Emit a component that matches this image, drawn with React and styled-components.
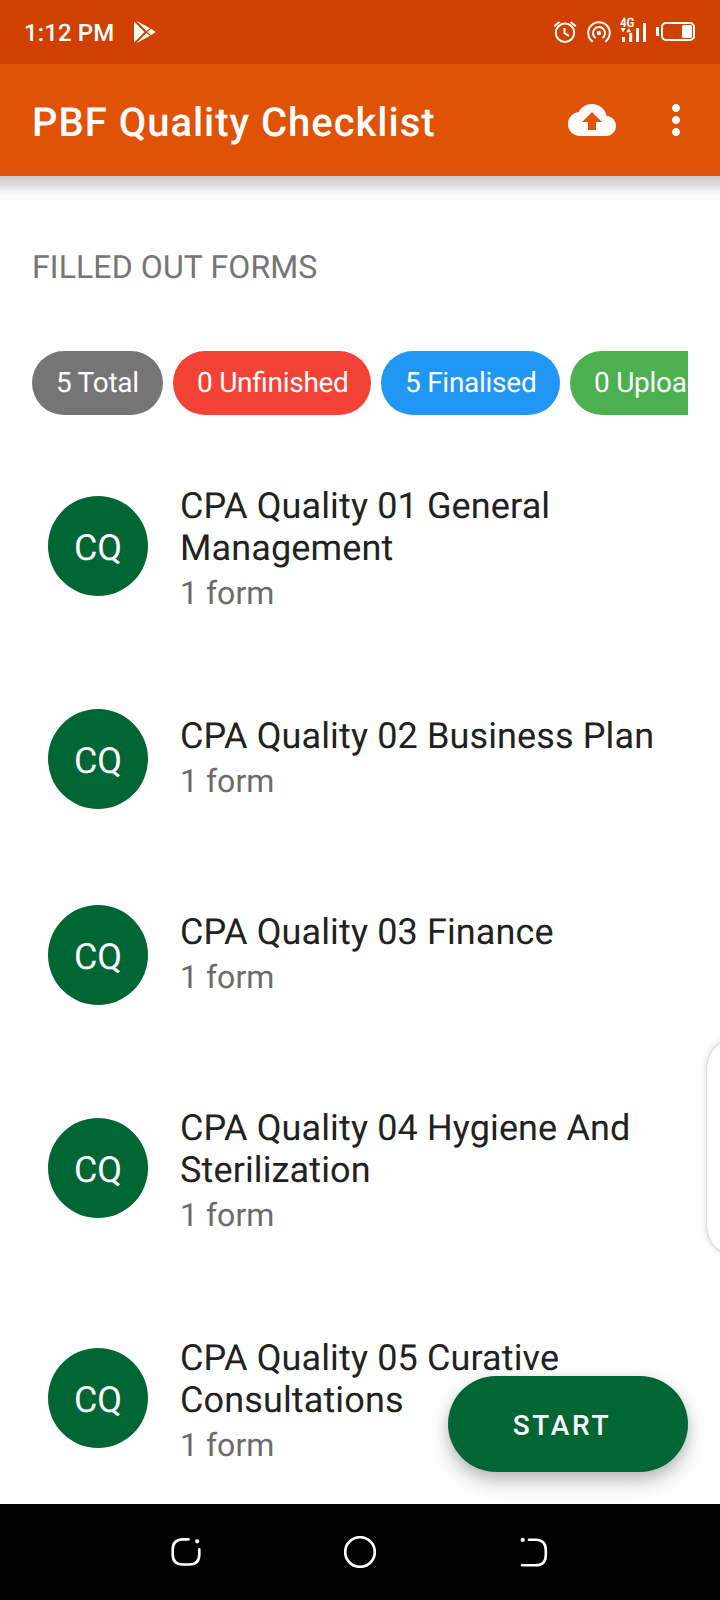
import React from "react";
import styled, { createGlobalStyle } from "styled-components";

const Global = createGlobalStyle`
  *, *::before, *::after { box-sizing: border-box; }
  html, body { margin: 0; padding: 0; background: #fff; }
  body { font-family: Roboto, "Noto Sans", sans-serif; overflow: hidden; text-rendering: geometricPrecision; }
`;

const Screen = styled.div`
  position: relative;
  display: flex;
  flex-direction: column;
  width: 720px;
  height: 1600px;
  overflow: hidden;
  background: #fefefe;
`;

const StatusBar = styled.div`
  flex: none;
  display: flex;
  align-items: center;
  justify-content: space-between;
  height: 64px;
  padding: 0 24px;
  background: #d04000;
  color: #fff;
`;

const StatusGroup = styled.div`
  display: flex;
  align-items: center;
`;

const Clock = styled.span`
  font-size: 24px;
  font-weight: 500;
  line-height: 28px;
  letter-spacing: 0.1px;
  margin-right: 20px;
  padding-top: 2px;
`;

const StatusIcons = styled.svg`
  display: block;
  width: 144px;
  height: 28px;
  overflow: visible;
`;

const NetworkLabel = styled.text`
  font-size: 13px;
  font-weight: 700;
`;

const AppBar = styled.header`
  position: relative;
  flex: none;
  display: flex;
  align-items: center;
  height: 112px;
  padding: 0 32px;
  background: #e05206;
  color: #fff;

  &::after {
    content: "";
    position: absolute;
    left: 0;
    right: 0;
    top: 100%;
    height: 20px;
    background: linear-gradient(rgba(0, 0, 0, 0.2), rgba(0, 0, 0, 0.14) 40%, rgba(0, 0, 0, 0.04) 78%, transparent);
  }
`;

const Title = styled.h1`
  flex: 1;
  margin: 0;
  padding-top: 6px;
  font-size: 40px;
  font-weight: 500;
  line-height: 48px;
  letter-spacing: 0.97px;
  white-space: nowrap;
`;

const CloudIcon = styled.svg`
  width: 48px;
  height: 48px;
  margin-right: 36px;
`;

const MoreIcon = styled.svg`
  width: 48px;
  height: 48px;
  margin-right: -12px;
`;

const Content = styled.main`
  flex: 1;
  min-height: 0;
  overflow: hidden;
`;

const SectionTitle = styled.h2`
  margin: 0;
  padding: 72px 32px 0;
  font-size: 32px;
  font-weight: 400;
  line-height: 38px;
  letter-spacing: 0.12px;
  color: #757575;
`;

const Chips = styled.div`
  display: flex;
  gap: 10px;
  margin: 65px 32px 0;
  height: 64px;
  overflow: hidden;
`;

const Chip = styled.span`
  flex: none;
  width: ${(p) => p.$width}px;
  height: 64px;
  padding: 0 24px;
  border-radius: 32px;
  background: ${(p) => p.$color};
  color: #fff;
  font-size: 28px;
  line-height: 63px;
  letter-spacing: -0.27px;
  font-feature-settings: "liga" 1;
  white-space: nowrap;
`;

const List = styled.ul`
  list-style: none;
  margin: 0;
  padding: 16px 0 0;
`;

const Item = styled.li`
  display: flex;
  gap: 32px;
  padding: 48px 48px;
`;

const Avatar = styled.div`
  flex: none;
  align-self: center;
  width: 100px;
  height: 100px;
  padding-top: 2px;
  border-radius: 50%;
  background: #006633;
  color: #fff;
  font-size: 36px;
  line-height: 100px;
  text-align: center;
`;

const ItemText = styled.div`
  display: flex;
  flex-direction: column;
  gap: 5px;
  padding: 6px 0 1px;
  white-space: pre-line;
`;

const ItemTitle = styled.div`
  font-size: 36px;
  line-height: 42px;
  letter-spacing: 0.13px;
  color: #212121;
`;

const ItemMeta = styled.div`
  font-size: 32px;
  line-height: 38px;
  letter-spacing: 0.02px;
  color: #6b6b6b;
`;

const StartButton = styled.button`
  position: absolute;
  right: 32px;
  bottom: 128px;
  width: 240px;
  height: 96px;
  border: 0;
  border-radius: 48px;
  background: #006633;
  color: #fff;
  font-family: inherit;
  font-size: 28px;
  font-weight: 500;
  letter-spacing: 2.7px;
  line-height: 96px;
  padding: 2px 12px 0 0;
  box-shadow: 0 10px 18px rgba(0, 0, 0, 0.22), 0 2px 14px rgba(0, 0, 0, 0.1);
`;

const EdgePanel = styled.div`
  position: absolute;
  top: 1038px;
  right: -47px;
  width: 60px;
  height: 218px;
  border-radius: 30px;
  background: #fff;
  box-shadow: 0 0 6px rgba(0, 0, 0, 0.22), 0 0 1px rgba(0, 0, 0, 0.3);
`;

const NavBar = styled.nav`
  flex: none;
  position: relative;
  display: flex;
  justify-content: center;
  align-items: center;
  gap: 142px;
  height: 96px;
  background: #000;
  z-index: 1;
`;

const NavIcon = styled.svg`
  width: 32px;
  height: 32px;
  fill: none;
  stroke: #fff;
  stroke-width: 2.6;
  stroke-linecap: round;
`;

const chips = [
  { label: "5 Total", color: "#757575", width: 131 },
  { label: "0 Unfinished", color: "#f44336", width: 198 },
  { label: "5 Finalised", color: "#2196f3", width: 179 },
  { label: "0 Uploaded", color: "#4caf50", width: 190 },
];

const forms = [
  "CPA Quality 01 General\nManagement",
  "CPA Quality 02 Business Plan",
  "CPA Quality 03 Finance",
  "CPA Quality 04 Hygiene And\nSterilization",
  "CPA Quality 05 Curative\nConsultations",
];

export default function App() {
  return (
    <>
      <Global />
      <Screen>
        <StatusBar>
          <StatusGroup>
            <Clock>1:12 PM</Clock>
            <svg width="22" height="24" viewBox="0 0 22 24" fill="#fff">
              <path d="M0 1.5L10.6 12 0 22.5z" />
              <path d="M1.8 .5L16 8.2l-3.8 2.9z" />
              <path d="M1.8 23.5L16 15.8l-3.8-2.9z" />
              <path d="M13.4 12l3.6-3.2L21.6 12 17 15.2z" />
              <path d="M2 1.2L12 11.2M2 22.8l10-10" stroke="#d04000" strokeWidth=".8" />
            </svg>
          </StatusGroup>
          <StatusIcons viewBox="552 18 144 28" fill="none" stroke="#fff" strokeWidth="2">
            <circle cx="565" cy="32.8" r="9.2" />
            <path d="M564.5 28v5.2l4.5 2.6M554.2 26.2l5.2-4.2M575.8 26.2l-5.2-4.2" />
            <circle cx="599" cy="33" r="2.2" fill="#fff" stroke="none" />
            <path d="M595.6 38a6 6 0 1 1 6.8 0M592.8 41.8a10.8 10.8 0 1 1 12.4 0" />
            <g fill="#fff" stroke="none">
              <path d="M620.6 28h5l-2.5 4.2zM626.2 32.2h5l-2.5-4.2z" />
              <path d="M622 37h3v5h-3zM629.2 33h3v9h-3zM636 28h3v14h-3zM643 23h3v19h-3z" />
              <path d="M656 27h3v9h-3z" />
              <rect x="682" y="25" width="10" height="13" rx="1.5" />
              <NetworkLabel x="620" y="27.3" textLength="14.5" lengthAdjust="spacingAndGlyphs">4G</NetworkLabel>
            </g>
            <rect x="662" y="23" width="32" height="17" rx="4" />
          </StatusIcons>
        </StatusBar>
        <AppBar>
          <Title>PBF Quality Checklist</Title>
          <CloudIcon viewBox="0 0 24 24" fill="#fff">
            <path d="M19.35 10.04C18.67 6.59 15.64 4 12 4 9.11 4 6.6 5.64 5.35 8.04 2.34 8.36 0 10.91 0 14c0 3.31 2.69 6 6 6h13c2.76 0 5-2.24 5-5 0-2.64-2.05-4.78-4.65-4.96zM14 13v4h-4v-4H7l5-5 5 5h-3z" />
          </CloudIcon>
          <MoreIcon viewBox="0 0 24 24" fill="#fff">
            <path d="M12 8c1.1 0 2-.9 2-2s-.9-2-2-2-2 .9-2 2 .9 2 2 2zm0 2c-1.1 0-2 .9-2 2s.9 2 2 2 2-.9 2-2-.9-2-2-2zm0 6c-1.1 0-2 .9-2 2s.9 2 2 2 2-.9 2-2-.9-2-2-2z" />
          </MoreIcon>
        </AppBar>
        <Content>
          <SectionTitle>FILLED OUT FORMS</SectionTitle>
          <Chips>
            {chips.map((c) => (
              <Chip key={c.label} $color={c.color} $width={c.width}>{c.label}</Chip>
            ))}
          </Chips>
          <List>
            {forms.map((name) => (
              <Item key={name}>
                <Avatar>CQ</Avatar>
                <ItemText>
                  <ItemTitle>{name}</ItemTitle>
                  <ItemMeta>1 form</ItemMeta>
                </ItemText>
              </Item>
            ))}
          </List>
        </Content>
        <EdgePanel />
        <StartButton>START</StartButton>
        <NavBar>
          <NavIcon viewBox="170 1536 32 32">
            <path d="M188.5 1539.4h-5.5q-10.3 0-10.3 10.5v4.6q0 10 10.3 10h6q10.3 0 10.3-10v-5.2" />
            <circle cx="197.2" cy="1541.3" r="2.1" fill="#fff" stroke="none" />
          </NavIcon>
          <NavIcon viewBox="0 0 32 32">
            <circle cx="16" cy="16" r="14.8" />
          </NavIcon>
          <NavIcon viewBox="518 1536 32 32">
            <path d="M529 1539.8h6.4q10.4 0 10.4 10.5v4.6q0 10.4-10.4 10.4H522" />
            <circle cx="522.7" cy="1539.9" r="2.1" fill="#fff" stroke="none" />
          </NavIcon>
        </NavBar>
      </Screen>
    </>
  );
}
